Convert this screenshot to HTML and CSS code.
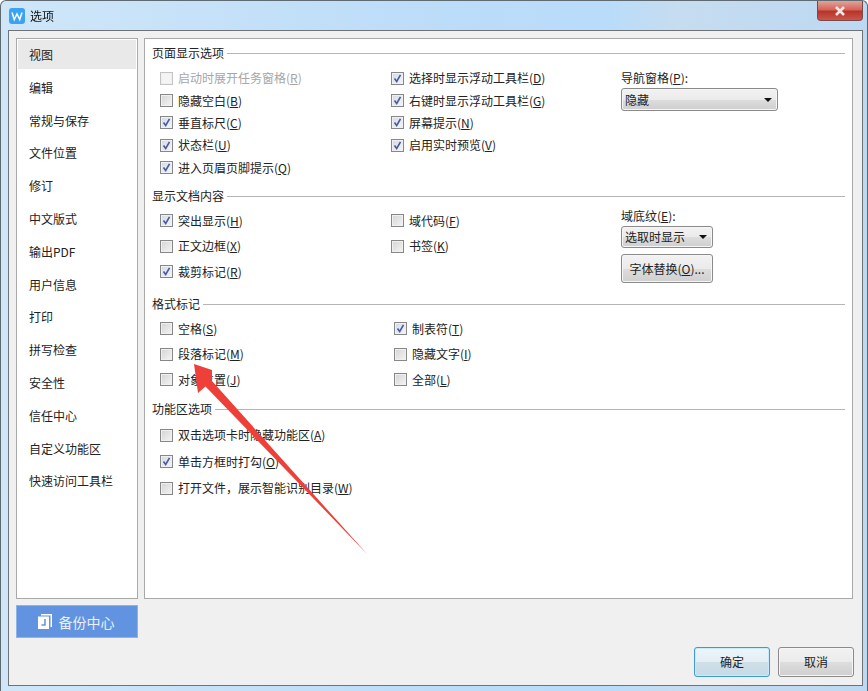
FILE: index.html
```html
<!DOCTYPE html>
<html lang="zh">
<head>
<meta charset="utf-8">
<title>选项</title>
<link rel="stylesheet" href="styles.css">
</head>
<body>
<div class="window">
  <header class="titlebar">
    <svg class="app-icon" width="16" height="16" viewBox="0 0 16 16"><rect width="16" height="16" rx="3" fill="#3aa3f2"/><path d="M3 4.5 L5.3 11.5 L8 6 L10.7 11.5 L13 4.5" fill="none" stroke="#fff" stroke-width="1.5"/></svg>
    <span class="title">选项</span>
    <div class="close"><svg width="14" height="10" viewBox="0 0 14 10"><path d="M3 1 L11 9 M11 1 L3 9" stroke="#f3e6e4" stroke-width="2.6"/></svg></div>
  </header>
  <div class="client">
    <div class="panes">
      <div class="left">
        <nav class="sidebar">
          <div class="nav-item active">视图</div>
          <div class="nav-item">编辑</div>
          <div class="nav-item">常规与保存</div>
          <div class="nav-item">文件位置</div>
          <div class="nav-item">修订</div>
          <div class="nav-item">中文版式</div>
          <div class="nav-item">输出PDF</div>
          <div class="nav-item">用户信息</div>
          <div class="nav-item">打印</div>
          <div class="nav-item">拼写检查</div>
          <div class="nav-item">安全性</div>
          <div class="nav-item">信任中心</div>
          <div class="nav-item">自定义功能区</div>
          <div class="nav-item">快速访问工具栏</div>
        </nav>
        <div class="backup">
          <svg width="16" height="17" viewBox="0 0 16 17"><path d="M4 1 H15 V14 H13.5 V2.5 H4 Z" fill="#fff"/><path d="M1 3.5 H12 V16 H1 Z" fill="#fff"/><path d="M8 6 V12 H4.5" fill="none" stroke="#6293e0" stroke-width="1.5"/></svg>
          <span>备份中心</span>
        </div>
      </div>
      <main class="content">
        <section class="group g1">
          <h2 class="legend"><span>页面显示选项</span></h2>
          <div class="cols">
            <div class="col c1">
              <label class="opt off"><i class="box"></i>启动时展开任务窗格(<u>R</u>)</label>
              <label class="opt"><i class="box"></i>隐藏空白(<u>B</u>)</label>
              <label class="opt"><i class="box on"></i>垂直标尺(<u>C</u>)</label>
              <label class="opt"><i class="box on"></i>状态栏(<u>U</u>)</label>
              <label class="opt"><i class="box on"></i>进入页眉页脚提示(<u>Q</u>)</label>
            </div>
            <div class="col c2">
              <label class="opt"><i class="box on"></i>选择时显示浮动工具栏(<u>D</u>)</label>
              <label class="opt"><i class="box on"></i>右键时显示浮动工具栏(<u>G</u>)</label>
              <label class="opt"><i class="box on"></i>屏幕提示(<u>N</u>)</label>
              <label class="opt"><i class="box on"></i>启用实时预览(<u>V</u>)</label>
            </div>
            <div class="col c3">
              <div class="field-label">导航窗格(<u>P</u>):</div>
              <div class="select wide">隐藏<b class="caret"></b></div>
            </div>
          </div>
        </section>
        <section class="group g2">
          <h2 class="legend"><span>显示文档内容</span></h2>
          <div class="cols">
            <div class="col c1">
              <label class="opt"><i class="box on"></i>突出显示(<u>H</u>)</label>
              <label class="opt"><i class="box"></i>正文边框(<u>X</u>)</label>
              <label class="opt"><i class="box on"></i>裁剪标记(<u>R</u>)</label>
            </div>
            <div class="col c2">
              <label class="opt"><i class="box"></i>域代码(<u>F</u>)</label>
              <label class="opt"><i class="box"></i>书签(<u>K</u>)</label>
            </div>
            <div class="col c3 tight">
              <div class="field-label">域底纹(<u>E</u>):</div>
              <div class="select narrow">选取时显示<b class="caret"></b></div>
              <div class="btn font-btn">字体替换(<u>O</u>)...</div>
            </div>
          </div>
        </section>
        <section class="group g3">
          <h2 class="legend"><span>格式标记</span></h2>
          <div class="cols">
            <div class="col c1">
              <label class="opt"><i class="box"></i>空格(<u>S</u>)</label>
              <label class="opt"><i class="box"></i>段落标记(<u>M</u>)</label>
              <label class="opt"><i class="box"></i>对象位置(<u>J</u>)</label>
            </div>
            <div class="col c2 c2b">
              <label class="opt"><i class="box on"></i>制表符(<u>T</u>)</label>
              <label class="opt"><i class="box"></i>隐藏文字(<u>I</u>)</label>
              <label class="opt"><i class="box"></i>全部(<u>L</u>)</label>
            </div>
          </div>
        </section>
        <section class="group g4">
          <h2 class="legend"><span>功能区选项</span></h2>
          <div class="col c1 wide-col">
            <label class="opt"><i class="box"></i>双击选项卡时隐藏功能区(<u>A</u>)</label>
            <label class="opt"><i class="box on"></i>单击方框时打勾(<u>O</u>)</label>
            <label class="opt"><i class="box"></i>打开文件，展示智能识别目录(<u>W</u>)</label>
          </div>
        </section>
      </main>
    </div>
    <footer class="actions">
      <div class="btn primary">确定</div>
      <div class="btn cancel">取消</div>
    </footer>
  </div>
</div>
<svg class="arrow" width="868" height="691" viewBox="0 0 868 691"><path d="M194 364 L212 370 L212 381 L368 555 L205.5 386.5 L198 393 Z" fill="#ee3f38"/></svg>
</body>
</html>
```
FILE: styles.css
```css
* { box-sizing: border-box; }
html, body { margin: 0; padding: 0; }
body {
  width: 868px; height: 691px; overflow: hidden; position: relative;
  font: 12px/16px "Noto Sans CJK SC", "Liberation Sans", sans-serif;
  color: #222;
  background: #fff;
}
u { text-decoration: underline; text-underline-offset: 1px; }
.window {
  height: 691px; padding: 0 4px 5px 7px;
  background: linear-gradient(90deg, #cfe6f8 0%, #bcdcf8 50%, #b9dcfb 70%, #c6dcf0 78%, #bcd8f2 100%);
  border: 1px solid #5f6a72; border-bottom: 0; border-radius: 6px 6px 0 0;
  display: flex; flex-direction: column;
  filter: blur(0.35px);
}
.titlebar { height: 29px; display: flex; align-items: center; padding: 1px 0 0 1px; position: relative; flex: none; }
.app-icon { margin-right: 5px; }
.title { font-size: 12px; color: #111; }
.close {
  position: absolute; right: 0; top: 0; width: 46px; height: 20px;
  background: linear-gradient(#e2a39a 0%, #d4655a 45%, #b8342a 55%, #c9574c 100%);
  border: 1px solid #7a4a48; border-top: 0; border-radius: 0 0 4px 4px;
  display: flex; align-items: center; justify-content: center;
}
.client {
  flex: 1; background: #f0f0f0; border: 1px solid #6f7377;
  padding: 7px 8px 0 7px; display: flex; flex-direction: column; min-height: 0;
}
.panes { display: flex; gap: 6px; height: 600px; flex: none; }
.left { width: 122px; flex: none; display: flex; flex-direction: column; gap: 6px; }
.sidebar { height: 561px; background: #fff; border: 1px solid #a9a9a9; padding: 1px; flex: none; }
.nav-item { height: 32.8px; line-height: 29px; padding-left: 11px; color: #222; }
.nav-item.active { background: #e9e9e9; height: 29px; line-height: 29px; margin-bottom: 3.8px; }
.backup {
  height: 35px; background: #6293e0; color: #e8f0fb; display: flex; align-items: center;
  justify-content: center; gap: 6px; font-size: 14px; border: 1px solid #8fb2e8; padding-right: 3px;
}
.content { width: 709px; height: 561px; flex: none; background: #fff; border: 1px solid #a9a9a9; padding: 0 7px; }
.group { display: flex; flex-direction: column; }
.legend { margin: 0; font: inherit; display: flex; align-items: center; gap: 3px; height: 16px; color: #222; }
.legend::after { content: ""; flex: 1; height: 1px; background: #b5b5b5; }
.g1 { padding-top: 6px; height: 149px; }
.g2 { height: 108px; }
.g3 { height: 105px; }
.g1 .cols { padding-top: 6px; }
.g2 .cols { padding-top: 4px; }
.g3 .cols { padding-top: 4px; }
.cols { display: flex; }
.col { display: flex; flex-direction: column; }
.c1 { width: 239px; padding-left: 8px; }
.c2 { width: 230px; }
.c2b { padding-left: 3px; }
.c3 { flex: 1; }
.wide-col { width: auto; padding-top: 5px; }
.opt { display: flex; align-items: center; height: 22.4px; white-space: nowrap; }
.g2 .opt, .g3 .opt { height: 25.5px; }
.g4 .opt { height: 26.5px; }
.opt.off { color: #a6a6a6; }
.box {
  width: 13px; height: 13px; margin-right: 5px; flex: none; display: block;
  border: 1px solid #868787; background: linear-gradient(135deg, #d4d4d4, #f4f4f4);
  box-shadow: inset 0 0 0 1px #f0f0f0;
}
.off .box { border-color: #c4c4c4; background: #f4f4f4; }
.box.on {
  background:
    url("data:image/svg+xml,%3Csvg xmlns='http://www.w3.org/2000/svg' width='11' height='11'%3E%3Cpath d='M2.5 5.5 L4.7 8.5 L8.5 1.8' fill='none' stroke='%234a5a9c' stroke-width='1.6'/%3E%3C/svg%3E") center no-repeat,
    linear-gradient(135deg, #d3d9e6, #f4f6fa);
}
.c3 .field-label { height: 16px; margin-top: 3px; margin-bottom: 2px; }
.c3.tight .field-label { margin-top: 0; margin-bottom: 2px; }
.select {
  height: 23px; border: 1px solid #8a8a8a; border-radius: 3px; padding-left: 3px;
  background: linear-gradient(#f2f2f2 0%, #ebebeb 50%, #dddddd 51%, #cfcfcf 100%);
  display: flex; align-items: center; justify-content: space-between; padding-right: 5px;
  box-shadow: inset 0 0 0 1px #f6f6f6;
}
.wide { width: 157px; }
.narrow { width: 92px; height: 22px; }
.caret { width: 0; height: 0; border: 4px solid transparent; border-top: 4px solid #111; border-bottom: 0; }
.btn {
  border: 1px solid #8a8a8a; border-radius: 3px; display: flex; align-items: center; justify-content: center;
  background: linear-gradient(#f2f2f2 0%, #ebebeb 50%, #dddddd 51%, #cfcfcf 100%);
  box-shadow: inset 0 0 0 1px #f6f6f6;
}
.font-btn { width: 92px; height: 29px; margin-top: 6px; }
.actions { display: flex; justify-content: flex-end; gap: 8px; padding-top: 9px; }
.actions .btn { width: 76px; height: 30px; }
.primary { border-color: #3c9ad4; background: linear-gradient(#ecf5fa 0%, #e4eef4 50%, #cfdfe8 51%, #c6dbe6 100%); box-shadow: inset 0 0 0 1px #c8ecfb; }
.arrow { position: absolute; left: 0; top: 0; pointer-events: none; filter: blur(0.4px); }
```
